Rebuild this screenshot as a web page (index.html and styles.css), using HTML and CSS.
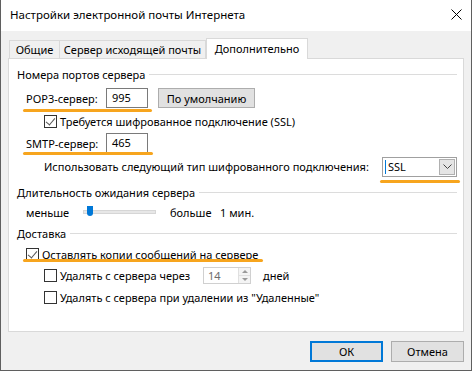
FILE: index.html
```
<!DOCTYPE html>
<html lang="ru">
<head>
    <meta charset="UTF-8">
    <title>Настройки электронной почты Интернета</title>
    <link rel="stylesheet" href="styles.css">
</head>
<body>
    <div class="window">
        <!-- Title bar -->
        <div class="titlebar">
            <span class="title">Настройки электронной почты Интернета</span>
            <svg class="close" viewBox="0 0 11 11" width="11" height="11">
                <path d="M0.5 0.5 L10.5 10.5 M10.5 0.5 L0.5 10.5" stroke="#000" stroke-width="1" fill="none"/>
            </svg>
        </div>

        <div class="client">
            <div class="tabs">
                <div class="tab tab-general">Общие</div>
                <div class="tab tab-outgoing">Сервер исходящей почты</div>
                <div class="tab tab-advanced active">Дополнительно</div>
            </div>

            <div class="panel">
                <div class="group-title"><span>Номера портов сервера</span></div>

                <div class="row row-port mark mark-pop">
                    <span class="port-label">POP3-сервер:</span>
                    <div class="field">995</div>
                    <button class="btn btn-default">По умолчанию</button>
                </div>

                <div class="row row-check sub">
                    <span class="checkbox checked"></span>
                    <span>Требуется шифрованное подключение (SSL)</span>
                </div>

                <div class="row row-port row-smtp mark mark-smtp">
                    <span class="port-label">SMTP-сервер:</span>
                    <div class="field">465</div>
                </div>

                <div class="row row-enc sub">
                    <span>Использовать следующий тип шифрованного подключения:</span>
                    <div class="select mark mark-select">
                        <span class="caret"></span>
                        <span class="select-value">SSL</span>
                        <span class="select-btn">
                            <svg viewBox="0 0 9 5" width="9" height="5"><path d="M0.5 0.5 L4.5 4.5 L8.5 0.5" stroke="#444" fill="none"/></svg>
                        </span>
                    </div>
                </div>

                <div class="group-title group-timeout"><span>Длительность ожидания сервера</span></div>

                <div class="row row-slider">
                    <span class="slider-min">меньше</span>
                    <div class="slider"><span class="thumb"></span></div>
                    <span class="slider-max">больше</span>
                    <span>1 мин.</span>
                </div>

                <div class="group-title group-delivery"><span>Доставка</span></div>

                <div class="row row-check row-keep mark mark-keep">
                    <span class="checkbox checked"></span>
                    <span>Оставлять копии сообщений на сервере</span>
                </div>

                <div class="row row-check row-days sub">
                    <span class="checkbox"></span>
                    <span class="days-label">Удалять с сервера через</span>
                    <div class="spinner">
                        <span class="spin-value">14</span>
                        <span class="spin-btns">
                            <span class="spin-up"></span>
                            <span class="spin-down"></span>
                        </span>
                    </div>
                    <span class="days">дней</span>
                </div>

                <div class="row row-check row-deleted sub">
                    <span class="checkbox"></span>
                    <span>Удалять с сервера при удалении из "Удаленные"</span>
                </div>
            </div>

            <div class="footer">
                <button class="btn btn-ok">ОК</button>
                <button class="btn">Отмена</button>
            </div>
        </div>
    </div>
</body>
</html>
```
FILE: styles.css
```
/* General */
body {
    margin: 0;
    padding: 0;
    font-family: "Noto Sans", "Open Sans", sans-serif;
    font-size: 11px;
    color: #000;
    background: #fff;
}

.window {
    width: 472px;
    height: 371px;
    box-sizing: border-box;
    border: 1px solid #5f5f5f;
    border-top: none;
    display: flex;
    flex-direction: column;
    background: #f0f0f0;
    white-space: nowrap;
}

/* Title bar */
.titlebar {
    height: 31px;
    background: #fff;
    display: flex;
    align-items: center;
    justify-content: space-between;
    padding: 0 9px 2px 9px;
    box-sizing: border-box;
    font-size: 11.5px;
}

.close {
    display: block;
}

.client {
    flex: 1;
    padding: 7px 7px 0 7px;
    display: flex;
    flex-direction: column;
}

/* Tabs */
.tabs {
    display: flex;
    align-items: flex-end;
    padding-left: 1px;
    height: 20px;
    position: relative;
    z-index: 1;
}

.tab {
    height: 18px;
    line-height: 17px;
    box-sizing: border-box;
    text-align: center;
    border: 1px solid #d9d9d9;
    border-bottom: none;
    margin-right: -1px;
    background: #f0f0f0;
}

.tab-general {
    width: 51px;
}

.tab-outgoing {
    width: 147px;
}

.tab.active {
    width: 102px;
    height: 21px;
    margin-bottom: -1px;
    line-height: 19px;
    background: #fff;
    margin-left: 1px;
}

.panel {
    height: 274px;
    box-sizing: border-box;
    background: #fff;
    border: 1px solid #d9d9d9;
    padding: 7px 6px 0 8px;
    display: flex;
    flex-direction: column;
}

/* Group titles */
.group-title {
    display: flex;
    align-items: center;
    height: 16px;
}

.group-title::after {
    content: "";
    flex: 1;
    border-top: 1px solid #dcdcdc;
    margin-left: 4px;
}

.group-timeout {
    margin-top: 7px;
}

.group-delivery {
    margin-top: 5px;
}

/* Rows */
.row {
    display: flex;
    align-items: center;
    position: relative;
    padding-left: 9px;
}

.row.sub {
    padding-left: 27px;
}

.row-port {
    height: 20px;
    margin-top: 6px;
}

.row-smtp {
    margin-top: 5px;
}

.row-check {
    height: 14px;
    margin-top: 6px;
}

.row-enc {
    height: 21px;
    margin-top: 3px;
    padding-left: 28px;
}

.row-slider {
    height: 16px;
    margin-top: 4px;
}

.row-keep {
    margin-top: 6px;
}

.row-days {
    height: 17px;
    margin-top: 6px;
}

.row-deleted {
    margin-top: 6px;
}

.port-label {
    width: 80px;
}

.field {
    width: 42px;
    height: 20px;
    box-sizing: border-box;
    border: 1px solid #7a7a7a;
    padding: 0 5px;
    line-height: 18px;
}

/* Buttons */
.btn {
    font-family: inherit;
    font-size: 11px;
    color: #000;
    background: #e1e1e1;
    border: 1px solid #adadad;
    padding: 0;
    margin: 0;
    box-sizing: border-box;
}

.btn-default {
    width: 97px;
    height: 20px;
    margin-left: 10px;
}

/* Checkboxes */
.checkbox {
    width: 13px;
    height: 13px;
    box-sizing: border-box;
    border: 1px solid #333;
    background: #fff;
    margin-right: 3px;
    position: relative;
    flex-shrink: 0;
}

.checkbox.checked::after {
    content: "";
    position: absolute;
    left: 3px;
    top: 0px;
    width: 4px;
    height: 8px;
    border-right: 1px solid #555;
    border-bottom: 1px solid #555;
    transform: rotate(40deg);
}

/* Select */
.select {
    margin-left: auto;
    width: 75px;
    height: 20px;
    box-sizing: border-box;
    border: 1px solid #a0a0a0;
    display: flex;
    align-items: center;
    padding: 1px;
}

.caret {
    width: 1px;
    height: 14px;
    background: #0078d7;
    margin: 0 2px 0 1px;
}

.select-value {
    flex: 1;
}

.select-btn {
    width: 16px;
    height: 16px;
    box-sizing: border-box;
    background: #e5e5e5;
    border: 1px solid #b0b0b0;
    display: flex;
    align-items: center;
    justify-content: center;
}

.select-btn svg {
    display: block;
}

/* Slider */
.slider-min {
    width: 57px;
}

.slider {
    width: 73px;
    height: 4px;
    box-sizing: border-box;
    background: #e7e7e7;
    border: 1px solid #d6d6d6;
    position: relative;
}

.thumb {
    position: absolute;
    left: 3px;
    top: -5px;
    width: 6px;
    height: 10px;
    background: #0078d7;
    border-radius: 0 0 3px 3px;
}

.slider-max {
    margin-left: 14px;
    width: 50px;
}

/* Spinner */
.days-label {
    width: 143px;
}

.spinner {
    width: 48px;
    height: 17px;
    box-sizing: border-box;
    border: 1px solid #d0d0d0;
    display: flex;
    align-items: center;
    padding-left: 4px;
    color: #6d6d6d;
}

.spin-value {
    flex: 1;
}

.spin-btns {
    width: 11px;
    height: 15px;
    display: flex;
    flex-direction: column;
    border-left: 1px solid #e0e0e0;
}

.spin-up,
.spin-down {
    flex: 1;
    position: relative;
    background: #f4f4f4;
}

.spin-up {
    border-bottom: 1px solid #e0e0e0;
}

.spin-up::after,
.spin-down::after {
    content: "";
    position: absolute;
    left: 3px;
    width: 0;
    height: 0;
    border-left: 3px solid transparent;
    border-right: 3px solid transparent;
}

.spin-up::after {
    top: 2px;
    border-bottom: 3px solid #9a9a9a;
}

.spin-down::after {
    top: 2px;
    border-top: 3px solid #9a9a9a;
}

.days {
    margin-left: 12px;
}

/* Orange marks drawn over the dialog */
.mark::after {
    content: "";
    position: absolute;
    height: 3px;
    border-radius: 2px;
    background: #f7a51e;
}

.mark-pop::after {
    left: 6px;
    width: 129px;
    top: 21px;
}

.mark-smtp::after {
    left: 6px;
    width: 130px;
    top: 19px;
}

.mark-select {
    position: relative;
}

.mark-select::after {
    left: -3px;
    width: 80px;
    top: 22px;
}

.mark-keep::after {
    left: 6px;
    width: 240px;
    top: 12px;
}

/* Footer */
.footer {
    display: flex;
    justify-content: flex-end;
    gap: 8px;
    margin-top: 9px;
}

.footer .btn {
    width: 73px;
    height: 21px;
}

.btn-ok {
    border: 2px solid #0078d7;
}
```
